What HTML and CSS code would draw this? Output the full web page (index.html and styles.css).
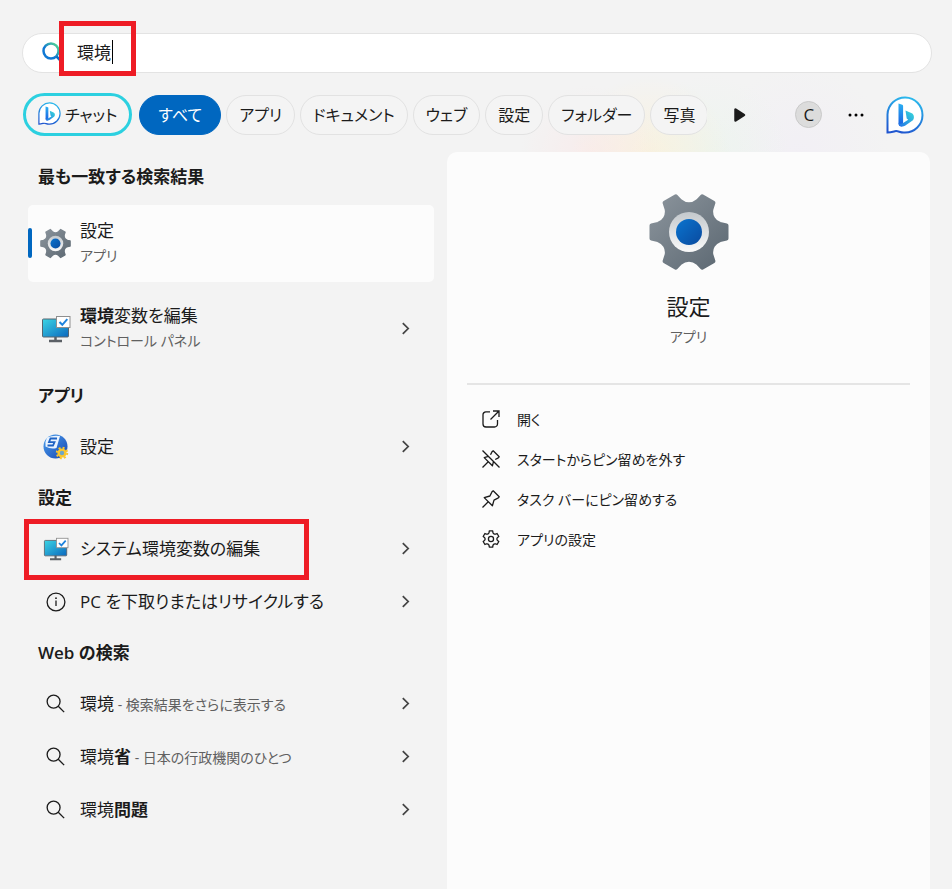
FILE: index.html
```html
<!DOCTYPE html>
<html lang="ja">
<head>
  <meta charset="UTF-8" />
  <meta name="viewport" content="width=device-width, initial-scale=1.0"/>
  <title>環境 - 検索</title>
  <link rel="stylesheet" href="styles.css">
</head>
<body>

  <!-- shared icons -->
  <svg class="sprite" width="0" height="0" aria-hidden="true">
    <defs>
      <linearGradient id="gearFill" x1="0" y1="0" x2="1" y2="1">
        <stop offset="0" stop-color="#8b949c"/>
        <stop offset="1" stop-color="#5c6872"/>
      </linearGradient>
      <linearGradient id="ringFill" x1="0" y1="0" x2="0" y2="1">
        <stop offset="0" stop-color="#c3c8cc"/>
        <stop offset="1" stop-color="#fafafa"/>
      </linearGradient>
      <linearGradient id="blueFill" x1="0" y1="0" x2="1" y2="1">
        <stop offset="0" stop-color="#0a74cf"/>
        <stop offset="1" stop-color="#0a4a9e"/>
      </linearGradient>
      <linearGradient id="screenFill" x1="0" y1="0" x2="1" y2="1">
        <stop offset="0" stop-color="#3bd5e4"/>
        <stop offset="1" stop-color="#0b67be"/>
      </linearGradient>
      <linearGradient id="bubbleLine" x1="0.6" y1="0" x2="0.3" y2="1">
        <stop offset="0" stop-color="#2bb8ec"/>
        <stop offset="1" stop-color="#1f55cf"/>
      </linearGradient>
      <linearGradient id="bFill" x1="0" y1="0" x2="0" y2="1">
        <stop offset="0" stop-color="#2bb0f2"/>
        <stop offset="1" stop-color="#1a5be0"/>
      </linearGradient>
      <linearGradient id="bTail" x1="1" y1="0" x2="0" y2="1">
        <stop offset="0" stop-color="#38dcd8"/>
        <stop offset="1" stop-color="#2372e8"/>
      </linearGradient>
      <linearGradient id="lensLine" x1="0" y1="1" x2="1" y2="0">
        <stop offset="0.4" stop-color="#0f78d4"/>
        <stop offset="1" stop-color="#5de08a"/>
      </linearGradient>
      <linearGradient id="globeFill" x1="0" y1="0" x2="1" y2="1">
        <stop offset="0" stop-color="#4aa0ee"/>
        <stop offset="1" stop-color="#1746b4"/>
      </linearGradient>
    </defs>

    <symbol id="gear" viewBox="-40 -40 80 80">
      <path fill="url(#gearFill)" stroke="url(#gearFill)" stroke-width="4" stroke-linejoin="round" d="M37.5 6.500L31 8A13 13 0 0 0 22.400 22.900L24.400 29.200L13.100 35.700L8.600 30.900A13 13 0 0 0-8.600 30.900L-13.100 35.700L-24.400 29.200L-22.400 22.900A13 13 0 0 0-31 8L-37.500 6.500V-6.500L-31-8A13 13 0 0 0-22.400-22.900L-24.400-29.200L-13.100-35.700L-8.600-30.900A13 13 0 0 0 8.600-30.900L13.100-35.700L24.400-29.200L22.400-22.900A13 13 0 0 0 31-8L37.500-6.500Z"/>
      <circle r="20" fill="url(#ringFill)"/>
      <circle r="13" fill="url(#blueFill)"/>
    </symbol>

    <symbol id="monitor" viewBox="0 0 30 28">
      <path d="M8 26h13M14.500 21v5" stroke="#5b6066" stroke-width="2.500"/>
      <rect x="1.500" y="4" width="26" height="18" rx="1" fill="url(#screenFill)" stroke="#58656f"/>
      <rect x="15.500" y="1.500" width="13.500" height="11" fill="#fff" stroke="#8f8f8f"/>
      <path d="M18.500 7l2.800 2.800 5-5.600" fill="none" stroke="#1e83dd" stroke-width="2"/>
    </symbol>

    <symbol id="bing" viewBox="0 0 38 38">
      <path d="M1.500 36.500V18.500A17.500 17.500 0 1 1 19 36.500C14 37 12.500 34.500 9 35.200 6 36 4.500 36.500 1.500 36.500z" fill="#fff" stroke="url(#bubbleLine)" stroke-width="2"/>
      <path d="M12.500 7.500l3.800 1.300c.6.200.8.700.8 1.300V27l-1 3.500c-2.200.500-3.600-1-3.600-3z" fill="url(#bFill)"/>
      <path d="M19.500 14.500l6.300 2.700c2.500 1.300 2.900 5.300.8 7.300l-7.600 5.300c-3.200 2-6.500 0-6.500-3 1.500 1.300 3 1 4.600.100l5.100-3.100-1.500-1.300z" fill="url(#bTail)"/>
    </symbol>

    <symbol id="search" viewBox="0 0 20 20">
      <circle cx="8" cy="8" r="6.800" fill="none" stroke="currentColor" stroke-width="1.400"/>
      <path d="M12.900 12.900l6.200 6.200" stroke="currentColor" stroke-width="1.400"/>
    </symbol>

    <symbol id="chevron" viewBox="0 0 8 12">
      <path d="M1.500 1l5 5-5 5" fill="none" stroke="currentColor" stroke-width="1.600"/>
    </symbol>

    <symbol id="info" viewBox="0 0 20 20">
      <circle cx="10" cy="10" r="8.900" fill="none" stroke="currentColor" stroke-width="1.300"/>
      <path d="M10 8.500v5.500" stroke="currentColor" stroke-width="1.300"/>
      <circle cx="10" cy="6.200" r="0.900" fill="currentColor"/>
    </symbol>

    <symbol id="globe" viewBox="0 0 26 26">
      <circle cx="12.500" cy="12.500" r="12" fill="url(#globeFill)"/>
      <path d="M4 3.500Q10 1 17 2L13.500 14Q8 15.500 2.500 12.500Q2 7 4 3.500z" fill="#eaf4ff"/>
      <path d="M14 4.500H7.500L6 8.200H11.500L10 11.500H4.500" fill="none" stroke="#1f63c4" stroke-width="1.800"/>
      <circle cx="19" cy="19" r="5.200" fill="none" stroke="#fbc62d" stroke-width="2" stroke-dasharray="2 2.080"/>
      <circle cx="19" cy="19" r="3.400" fill="#6ea6c9" stroke="#fbc62d" stroke-width="2.400"/>
    </symbol>

    <symbol id="open" viewBox="0 0 18 18">
      <path d="M8 1.800H4A3 3 0 0 0 1 4.800V14a3 3 0 0 0 3 3h8.500a3 3 0 0 0 3-3V10M11 1h6v6M17 1L8.500 9.500" fill="none" stroke="currentColor" stroke-width="1.300"/>
    </symbol>

    <symbol id="pin" viewBox="0 0 18 18">
      <path d="M0.500 17.500L6 12M11.200.8l6 6c-.4 1-1 1.300-1.800 1.600l-3.400 1.700-1.600 5.700-8.200-8.200 5.700-1.600L9.600 2.600c.3-.8.700-1.400 1.600-1.800z" fill="none" stroke="currentColor" stroke-width="1.300" stroke-linejoin="round"/>
    </symbol>

    <symbol id="unpin" viewBox="0 0 18 18">
      <path d="M0.500 17.500L6 12M8.500 4.700l1.100-2.100c.3-.8.700-1.400 1.600-1.800l6 6c-.4 1-1 1.300-1.800 1.600l-2.200 1.100M11.400 11.800l-1 4-8.200-8.200 4-1.200M.5.500l17 17" fill="none" stroke="currentColor" stroke-width="1.300" stroke-linejoin="round"/>
    </symbol>

    <symbol id="gearLine" viewBox="-42 -42 84 84">
      <path fill="none" stroke="currentColor" stroke-width="6" stroke-linejoin="round" transform="rotate(30)" d="M37.5 8L30 9A10 10 0 0 0 22.800 21.500L25.700 28.500L11.800 36.500L7.200 30.500A10 10 0 0 0-7.200 30.500L-11.800 36.500L-25.700 28.500L-22.800 21.500A10 10 0 0 0-30 9L-37.500 8V-8L-30-9A10 10 0 0 0-22.800-21.500L-25.700-28.500L-11.800-36.500L-7.200-30.500A10 10 0 0 0 7.200-30.500L11.800-36.500L25.700-28.500L22.800-21.500A10 10 0 0 0 30-9L37.500-8Z"/>
      <circle r="12" fill="none" stroke="currentColor" stroke-width="6"/>
    </symbol>
  </svg>

  <header>
    <form class="search-box">
      <svg class="lens" viewBox="0 0 22 22" aria-hidden="true">
        <circle cx="9" cy="9" r="7.500" fill="none" stroke="url(#lensLine)" stroke-width="2.500"/>
        <path d="M14.500 14.500l5 5" stroke="#0f6cc8" stroke-width="2.500"/>
      </svg>
      <input type="text" id="query" value="環境" aria-label="検索" autocomplete="off" />
      <span class="caret"></span>
      <span class="mark mark-query"></span>
    </form>

    <nav class="toolbar">
      <div class="chips">
        <button type="button" class="chip chat"><svg class="chat-icon"><use href="#bing"/></svg>チャット</button>
        <button type="button" class="chip active">すべて</button>
        <button type="button" class="chip">アプリ</button>
        <button type="button" class="chip">ドキュメント</button>
        <button type="button" class="chip">ウェブ</button>
        <button type="button" class="chip">設定</button>
        <button type="button" class="chip">フォルダー</button>
        <button type="button" class="chip">写真</button>
      </div>
      <div class="tools">
        <button type="button" class="tool" aria-label="次へ">
          <svg width="12" height="16" viewBox="0 0 12 16"><path d="M1.500 2.500v11l8.500-5.500z" fill="#1b1b1b" stroke="#1b1b1b" stroke-width="2.500" stroke-linejoin="round"/></svg>
        </button>
        <button type="button" class="tool avatar">C</button>
        <button type="button" class="tool" aria-label="オプション">
          <svg width="16" height="4" viewBox="0 0 16 4"><circle cx="2" cy="2" r="1.500"/><circle cx="8" cy="2" r="1.500"/><circle cx="14" cy="2" r="1.500"/></svg>
        </button>
        <button type="button" class="tool" aria-label="Bing"><svg width="38" height="38"><use href="#bing"/></svg></button>
      </div>
    </nav>
  </header>

  <main>
    <section class="results">
      <h2>最も一致する検索結果</h2>
      <div class="best">
        <button type="button" class="item selected">
          <span class="icon"><svg width="31" height="31"><use href="#gear"/></svg></span>
          <span class="label">設定<small>アプリ</small></span>
        </button>
        <button type="button" class="item">
          <span class="icon"><svg width="30" height="28"><use href="#monitor"/></svg></span>
          <span class="label"><span><b>環境</b>変数を編集</span><small>コントロール パネル</small></span>
          <svg class="chevron"><use href="#chevron"/></svg>
        </button>
      </div>

      <h2>アプリ</h2>
      <button type="button" class="item">
        <span class="icon"><svg width="26" height="26"><use href="#globe"/></svg></span>
        <span class="label">設定</span>
        <svg class="chevron"><use href="#chevron"/></svg>
      </button>

      <h2>設定</h2>
      <button type="button" class="item">
        <span class="icon"><svg width="26" height="24"><use href="#monitor"/></svg></span>
        <span class="label">システム環境変数の編集</span>
        <svg class="chevron"><use href="#chevron"/></svg>
        <span class="mark mark-item"></span>
      </button>
      <button type="button" class="item">
        <span class="icon"><svg width="20" height="20"><use href="#info"/></svg></span>
        <span class="label">PC を下取りまたはリサイクルする</span>
        <svg class="chevron"><use href="#chevron"/></svg>
      </button>

      <h2>Web の検索</h2>
      <button type="button" class="item">
        <span class="icon"><svg width="19" height="19"><use href="#search"/></svg></span>
        <span class="label"><span>環境<span class="hint"> - 検索結果をさらに表示する</span></span></span>
        <svg class="chevron"><use href="#chevron"/></svg>
      </button>
      <button type="button" class="item">
        <span class="icon"><svg width="19" height="19"><use href="#search"/></svg></span>
        <span class="label"><span>環境<b>省</b><span class="hint"> - 日本の行政機関のひとつ</span></span></span>
        <svg class="chevron"><use href="#chevron"/></svg>
      </button>
      <button type="button" class="item">
        <span class="icon"><svg width="19" height="19"><use href="#search"/></svg></span>
        <span class="label"><span>環境<b>問題</b></span></span>
        <svg class="chevron"><use href="#chevron"/></svg>
      </button>
    </section>

    <section class="detail">
      <svg class="detail-icon"><use href="#gear"/></svg>
      <h1>設定</h1>
      <p>アプリ</p>
      <hr />
      <button type="button" class="action"><svg><use href="#open"/></svg>開く</button>
      <button type="button" class="action"><svg><use href="#unpin"/></svg>スタートからピン留めを外す</button>
      <button type="button" class="action"><svg><use href="#pin"/></svg>タスク バーにピン留めする</button>
      <button type="button" class="action"><svg><use href="#gearLine"/></svg>アプリの設定</button>
    </section>
  </main>

</body>
</html>
```

FILE: styles.css
```css
* {
  box-sizing: border-box;
}

body {
  display: flex;
  flex-direction: column;
  min-height: 100vh;
  margin: 0;
  padding: 33px 20px 0 22px;
  font-family: 'Open Sans', 'Noto Sans CJK JP', sans-serif;
  font-size: 17px;
  font-feature-settings: "palt";
  color: #1b1b1b;
  background:
    radial-gradient(circle at 590px 155px, rgba(255, 225, 225, 0.4), transparent 70px),
    radial-gradient(circle at 650px 155px, rgba(255, 240, 205, 0.5), transparent 80px),
    radial-gradient(circle at 710px 155px, rgba(228, 246, 232, 0.4), transparent 80px),
    radial-gradient(circle at 800px 155px, rgba(240, 234, 248, 0.4), transparent 90px),
    #f3f3f3;
}

button, input {
  font: inherit;
  font-feature-settings: inherit;
  color: inherit;
}

button {
  padding: 0;
  border: none;
  background: none;
  cursor: pointer;
}

.sprite {
  position: absolute;
}

/* search box */
.search-box {
  position: relative;
  display: flex;
  align-items: center;
  height: 40px;
  padding: 0 20px 0 19px;
  background: #fff;
  border: 1px solid #e3e3e3;
  border-radius: 20px;
}

.lens {
  width: 22px;
  height: 22px;
}

.search-box input {
  flex: 1;
  margin-left: 13px;
  padding: 0 0 3px;
  border: none;
  outline: none;
  background: none;
}

.caret {
  position: absolute;
  left: 89px;
  top: 6px;
  width: 1px;
  height: 24px;
  background: #000;
}

.mark {
  position: absolute;
  border: 5px solid #ee1c25;
  pointer-events: none;
}

.mark-query {
  left: 36px;
  top: -13px;
  width: 77px;
  height: 55px;
}

.mark-item {
  left: -4px;
  top: -3px;
  width: 285px;
  height: 61px;
}

/* filter chips */
.toolbar {
  display: flex;
  align-items: center;
  justify-content: space-between;
  height: 43px;
  margin: 20px 8px 16px 1px;
}

.chips {
  display: flex;
  align-items: center;
  gap: 5px;
  width: 684px;
  overflow: hidden;
}

.chip {
  flex: none;
  height: 40px;
  padding: 0 12px 2px;
  border: 1px solid #e2e2e2;
  border-radius: 20px;
  background: #f4f4f4;
  font-size: 16px;
  white-space: nowrap;
}

.chip.chat {
  display: flex;
  align-items: center;
  gap: 4px;
  height: 43px;
  margin-right: 2px;
  padding: 0 12px 2px;
  border: 3px solid #2cd0e0;
  border-radius: 22px;
}

.chat-icon {
  width: 23px;
  height: 23px;
}

.chip.active {
  padding: 0 18px 2px;
  background: #0067c0;
  border-color: #0067c0;
  color: #fff;
}

.tools {
  display: flex;
  align-items: center;
  justify-content: space-between;
  width: 190px;
}

.tool {
  display: flex;
  align-items: center;
  justify-content: center;
}

.avatar {
  width: 27px;
  height: 27px;
  margin: 0 3px 0 27px;
  border: 1px solid #c9c9c9;
  border-radius: 50%;
  background: #dcdcdc;
}

/* results */
main {
  flex: 1;
  display: grid;
  grid-template-columns: 406fr 483fr;
  gap: 13px;
  padding: 0 2px 0 6px;
}

h2 {
  height: 49px;
  margin: 0;
  padding-left: 10px;
  font-size: 17px;
  font-weight: 600;
  line-height: 49px;
}

.best {
  display: flex;
  flex-direction: column;
  gap: 8px;
  padding: 4px 0;
}

.item {
  position: relative;
  display: flex;
  align-items: center;
  gap: 8px;
  width: 100%;
  height: 53px;
  padding: 0 24px 0 11px;
  border-radius: 5px;
  text-align: left;
}

.best .item {
  height: 77px;
}

.best .label {
  padding-bottom: 2px;
}

.selected {
  background: #fcfcfc;
}

.selected::before {
  content: "";
  position: absolute;
  left: 0;
  top: 23px;
  width: 4px;
  height: 30px;
  border-radius: 2px;
  background: #0067c0;
}

.icon {
  display: flex;
  align-items: center;
  justify-content: center;
  width: 33px;
}

.label {
  flex: 1;
  display: flex;
  flex-direction: column;
  line-height: 25px;
}

small, .hint {
  font-size: 14px;
  color: #606060;
}

.chevron {
  width: 9px;
  height: 13px;
  color: #444;
}

/* detail panel */
.detail {
  display: flex;
  flex-direction: column;
  padding: 40px 20px 20px;
  background: #fcfcfc;
  border-radius: 10px 10px 0 0;
}

.detail-icon {
  align-self: center;
  width: 80px;
  height: 80px;
}

h1 {
  margin: 18px 0 3px;
  font-size: 22px;
  font-weight: 400;
  line-height: 32px;
  text-align: center;
}

.detail p {
  margin: 0;
  font-size: 14px;
  line-height: 24px;
  text-align: center;
  color: #606060;
}

hr {
  width: 100%;
  height: 2px;
  margin: 34px 0 14px;
  border: none;
  background: #e5e5e5;
}

.action {
  display: flex;
  align-items: center;
  gap: 17px;
  height: 40px;
  padding-left: 15px;
  font-size: 14px;
}

.action svg {
  width: 18px;
  height: 18px;
}
```
